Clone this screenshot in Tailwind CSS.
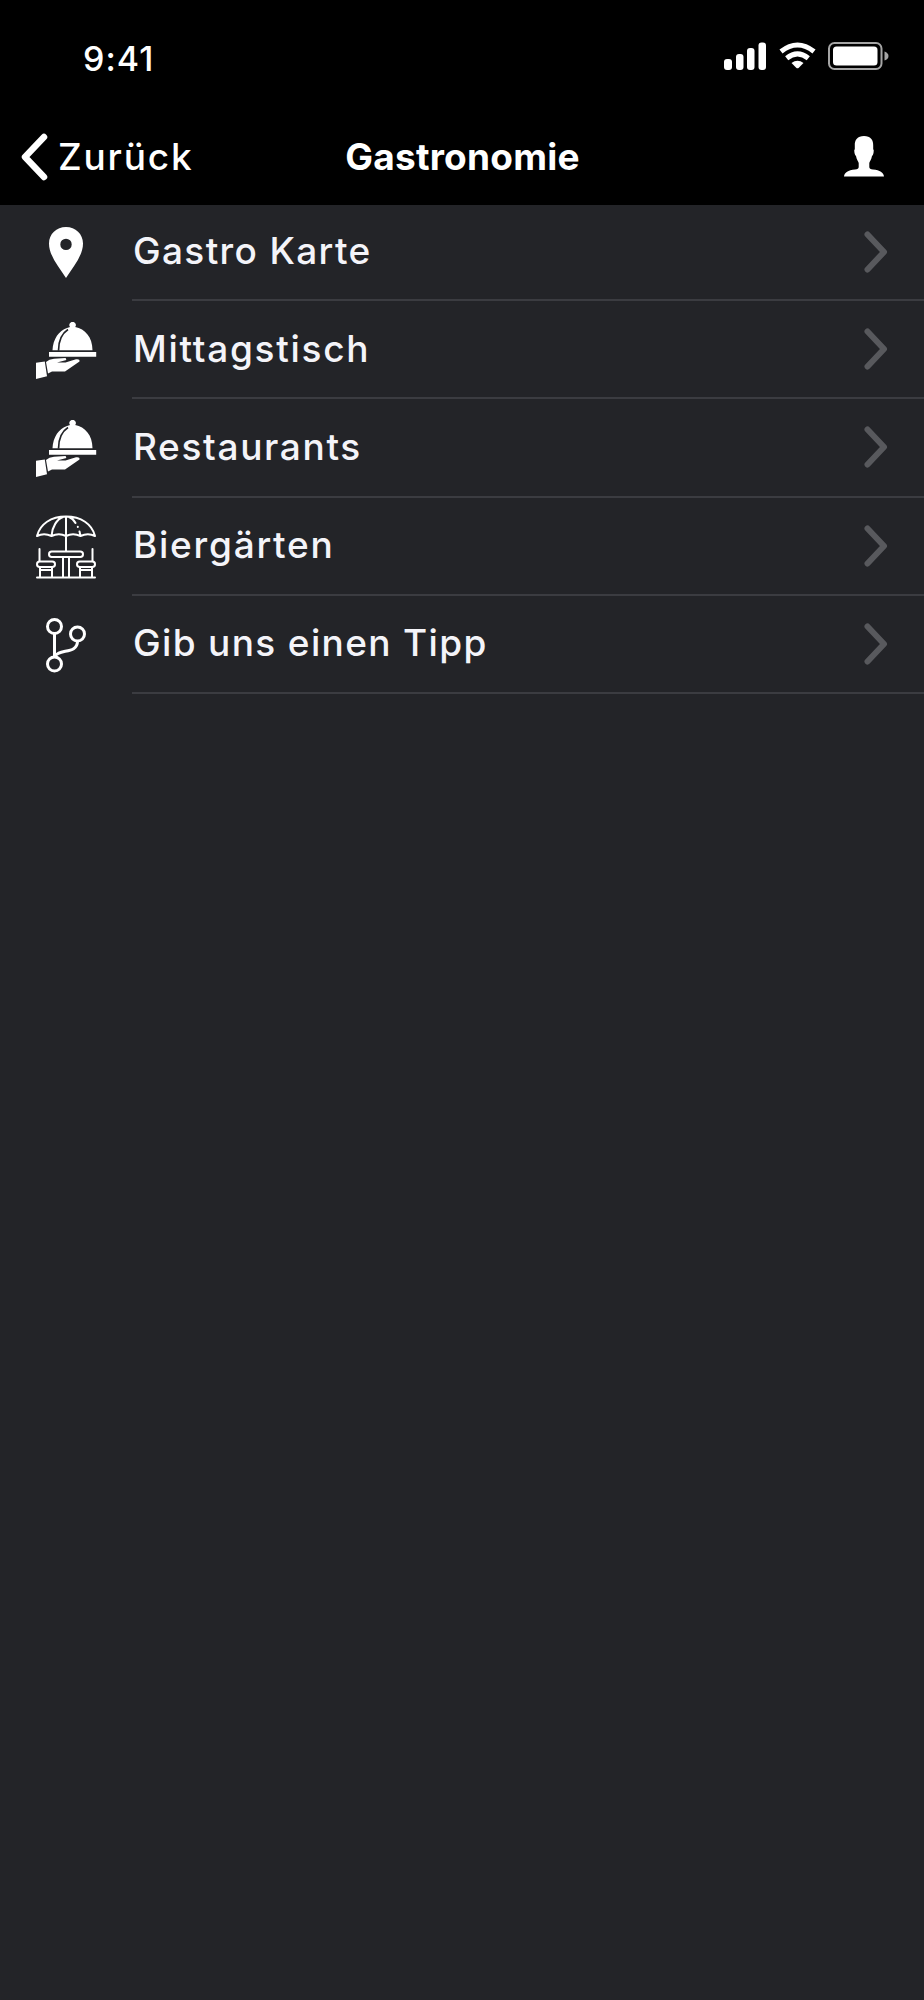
<!DOCTYPE html>
<html lang="de">
<head>
<meta charset="utf-8">
<title>Gastronomie</title>
<script src="https://cdn.jsdelivr.net/npm/@tailwindcss/browser@4"></script>
</head>
<body class="bg-[#232428]">
<svg class="hidden">
  <symbol id="chevron" viewBox="0 0 24 42"><path d="M3.500 3.500 20 21 3.500 38.500" fill="none" stroke="currentColor" stroke-width="6" stroke-linecap="round" stroke-linejoin="round"/></symbol>
  <symbol id="cloche" viewBox="0 0 61 57">
    <path d="M16.500 28.200C17 17 23 8.500 31 6L34 5A3.200 3.200 0 1 1 39.200 5C49 7 56.500 15 56.500 28.200Z" fill="currentColor"/>
    <path d="M22.500 28.700C22.500 17 26.500 11 32 7.500" fill="none" stroke="#232428" stroke-width="1.700"/>
    <path d="M13 30h47.200v4.800H13zM0 40.800 8.800 39.500 11 54.300 0 57ZM10 40Q13 37 18 36.700L29.500 36Q31.500 38 28.500 38.500L21 40.500H29.500L40 37.300Q44 36.700 43.500 39.500L29 49.500H16L12 51.500Z" fill="currentColor"/>
  </symbol>
</svg>
<div class="flex h-[2000px] w-[924px] flex-col overflow-hidden bg-[#232428] font-['Inter',sans-serif] text-[#f4f4f9]">
  <header class="h-[205px] shrink-0 bg-black text-white">
    <div class="flex h-[113px] items-start justify-between pl-[83px] pr-[34px]">
      <time class="mt-[38px] text-[34px] font-medium leading-[42px] tracking-[1px]">9:41</time>
      <div class="mt-[42px] flex items-start">
        <svg class="h-[29px] w-[44px]" viewBox="0 0 44 29" fill="currentColor"><rect x="0" y="17" width="8" height="11" rx="3"/><rect x="12" y="12" width="7.500" height="16" rx="3"/><rect x="23" y="6" width="7.500" height="22" rx="3"/><rect x="34.500" y="0.500" width="7.500" height="27.500" rx="3"/></svg>
        <svg class="ml-[11px] h-[29px] w-[38px]" viewBox="0 0 38 29" fill="none" stroke="currentColor"><path d="M2 9.500Q18.500-3.500 35 9.500" stroke-width="5"/><path d="M7.700 16.200Q18.500 7.500 29.300 16.200" stroke-width="5"/><path d="M12.500 21Q18.500 16.500 24.500 21L19.800 25.700Q18.500 26.700 17.200 25.700Z" fill="currentColor" stroke="none"/></svg>
        <svg class="ml-[11px] h-[29px] w-[62px]" viewBox="0 0 62 29"><rect x="1" y="1" width="52.500" height="26" rx="5.500" fill="none" stroke="#a5a5a5" stroke-width="2"/><rect x="5" y="4.500" width="44.500" height="19" rx="3.500" fill="#fff"/><path d="M56.500 9.500Q60.500 11 60.500 14T56.500 18.500Z" fill="#a5a5a5"/></svg>
      </div>
    </div>
    <div class="grid h-[88px] grid-cols-[1fr_auto_1fr] items-center pl-[20px] pr-[20px]">
      <div class="flex items-center">
        <svg class="h-[48px] w-[28px] rotate-180" viewBox="0 0 28 48"><path d="M4 4 23 24 4 44" fill="none" stroke="currentColor" stroke-width="6.500" stroke-linecap="round" stroke-linejoin="round"/></svg>
        <span class="ml-[10px] text-[37px] font-medium leading-[44px] tracking-[1.8px]">Zurück</span>
      </div>
      <h1 class="whitespace-nowrap pl-[1px] text-[37px] font-bold leading-[44px] tracking-[0.250px]">Gastronomie</h1>
      <svg class="mr-[19px] h-[42px] w-[42px] justify-self-end" viewBox="0 0 42 42" fill="currentColor"><path d="M21 0C14.500 0 11.500 4 11.800 9.500V13Q10.800 14 11.500 17Q12 19.500 13 20C13.500 23.500 15.700 26 15.700 27V31Q15.700 33 12 33.500C5 34.200 1.500 36.500 1 40.500H41C40.500 36.500 37 34.200 30 33.500Q26.300 33 26.300 31V27C26.300 26 28.500 23.500 29 20Q30 19.500 30.500 17Q31.200 14 30.200 13V9.500C30.500 4 27.500 0 21 0Z"/></svg>
    </div>
  </header>
  <main class="flex flex-col">
    <a class="flex h-[96px]">
      <span class="flex w-[132px] items-center justify-center pb-[2px]"><svg class="h-[52px] w-[34px]" viewBox="0 0 34 52"><path fill="currentColor" class="text-white" fill-rule="evenodd" d="M17 1C7.500 1 0 8 0 17.500C0 29 9 40 17 52C25 40 34 29 34 17.500C34 8 26.500 1 17 1ZM17 12.700A5.700 5.700 0 1 1 17 24.100A5.700 5.700 0 1 1 17 12.700Z"/></svg></span>
      <span class="flex flex-1 items-center justify-between border-b-2 border-[#3b3c41] pl-[1px] pr-[36px]"><span class="pb-[2px] text-[37px] font-medium leading-[44px] tracking-[1.350px]">Gastro Karte</span><svg class="h-[42px] w-[24px] text-[#58595d]"><use href="#chevron"/></svg></span>
    </a>
    <a class="flex h-[98.250px]">
      <span class="flex w-[132px] items-center justify-center text-white"><svg class="h-[57px] w-[61px]"><use href="#cloche"/></svg></span>
      <span class="flex flex-1 items-center justify-between border-b-2 border-[#3b3c41] pl-[1px] pr-[36px]"><span class="pb-[1px] text-[37px] font-medium leading-[44px] tracking-[1.700px]">Mittagstisch</span><svg class="h-[42px] w-[24px] text-[#58595d]"><use href="#chevron"/></svg></span>
    </a>
    <a class="flex h-[98.250px]">
      <span class="flex w-[132px] items-center justify-center text-white"><svg class="h-[57px] w-[61px]"><use href="#cloche"/></svg></span>
      <span class="flex flex-1 items-center justify-between border-b-2 border-[#3b3c41] pl-[1px] pr-[36px]"><span class="pb-[1px] text-[37px] font-medium leading-[44px] tracking-[1.650px]">Restaurants</span><svg class="h-[42px] w-[24px] text-[#58595d]"><use href="#chevron"/></svg></span>
    </a>
    <a class="flex h-[98.250px]">
      <span class="flex w-[132px] items-center justify-center text-white"><svg class="h-[64px] w-[60px]" viewBox="0 0 60 64" fill="none" stroke="currentColor" stroke-width="2" stroke-linecap="round" stroke-linejoin="round"><path d="M1 21C4 9 15 1.500 30 1.500S56 9 59 21Q52 17.500 44.500 21Q37 17.500 30 21Q23 17.500 15.500 21Q8 17.500 1 21ZM30 1.500V36M15.500 21C16 12 21 4 27 2M33 2Q37 3.500 39.500 8M41.800 11.800v.1M43.500 16.500 44.500 21"/><rect x="13" y="36.500" width="34" height="5.500" rx="2.750"/><rect x="1" y="46.500" width="18" height="5.500" rx="2.750"/><rect x="41" y="46.500" width="18" height="5.500" rx="2.750"/><path d="M3.500 34V46M56.500 34V46M4 52V62M16 52V62M44 52V62M56 52V62M27 42V62M33 42V62M4 55H16M44 55H56M1 62.500H59"/></svg></span>
      <span class="flex flex-1 items-center justify-between border-b-2 border-[#3b3c41] pl-[1px] pr-[36px]"><span class="pb-[1px] text-[37px] font-medium leading-[44px] tracking-[1.750px]">Biergärten</span><svg class="h-[42px] w-[24px] text-[#58595d]"><use href="#chevron"/></svg></span>
    </a>
    <a class="flex h-[98.250px]">
      <span class="flex w-[132px] items-center justify-center text-white"><svg class="h-[56px] w-[40px]" viewBox="0 0 40 56" fill="none" stroke="currentColor" stroke-width="3"><circle cx="8.500" cy="9.500" r="7"/><circle cx="31.500" cy="17" r="7"/><circle cx="8.500" cy="47" r="7"/><path d="M8.500 16.500V40M31.500 24C31.500 38 12 31 8.500 40"/></svg></span>
      <span class="flex flex-1 items-center justify-between border-b-2 border-[#3b3c41] pl-[1px] pr-[36px]"><span class="pb-[1px] text-[37px] font-medium leading-[44px] tracking-[1.350px]">Gib uns einen Tipp</span><svg class="h-[42px] w-[24px] text-[#58595d]"><use href="#chevron"/></svg></span>
    </a>
  </main>
</div>
</body>
</html>
